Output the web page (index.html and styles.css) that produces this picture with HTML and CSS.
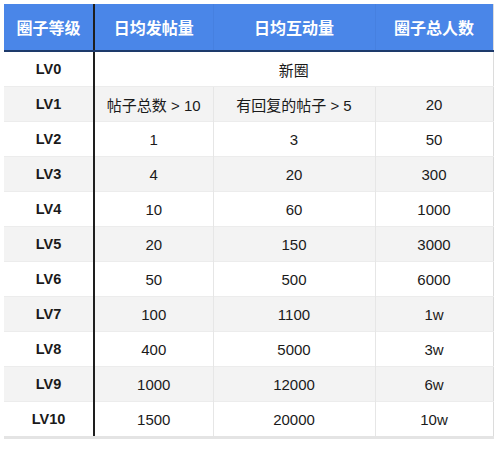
FILE: index.html
```html
<!DOCTYPE html>
<html>
<head>
<meta charset="utf-8">
<link rel="stylesheet" href="styles.css">
</head>
<body>
<div class="wrap">
<table class="grid">
  <colgroup>
    <col class="c1"><col class="c2"><col class="c3"><col class="c4">
  </colgroup>
  <thead>
    <tr><th class="lvl">圈子等级</th><th>日均发帖量</th><th>日均互动量</th><th>圈子总人数</th></tr>
  </thead>
  <tbody>
    <tr><td class="lvl">LV0</td><td colspan="3" class="span">新圈</td></tr>
    <tr class="alt"><td class="lvl">LV1</td><td>帖子总数 &gt; 10</td><td>有回复的帖子 &gt; 5</td><td>20</td></tr>
    <tr><td class="lvl">LV2</td><td>1</td><td>3</td><td>50</td></tr>
    <tr class="alt"><td class="lvl">LV3</td><td>4</td><td>20</td><td>300</td></tr>
    <tr><td class="lvl">LV4</td><td>10</td><td>60</td><td>1000</td></tr>
    <tr class="alt"><td class="lvl">LV5</td><td>20</td><td>150</td><td>3000</td></tr>
    <tr><td class="lvl">LV6</td><td>50</td><td>500</td><td>6000</td></tr>
    <tr class="alt"><td class="lvl">LV7</td><td>100</td><td>1100</td><td>1w</td></tr>
    <tr><td class="lvl">LV8</td><td>400</td><td>5000</td><td>3w</td></tr>
    <tr class="alt"><td class="lvl">LV9</td><td>1000</td><td>12000</td><td>6w</td></tr>
    <tr><td class="lvl">LV10</td><td>1500</td><td>20000</td><td>10w</td></tr>
  </tbody>
</table>
</div>
</body>
</html>
```
FILE: styles.css
```css
html, body {
  margin: 0;
  padding: 0;
  background: #ffffff;
}
.wrap {
  padding: 4px 0 0 4px;
}
.grid {
  border-collapse: collapse;
  table-layout: fixed;
  width: 489px;
  font-family: "Liberation Sans", "Noto Sans CJK SC", sans-serif;
  color: #1a1a1a;
  border-right: 1px solid #dcdcdc;
  border-bottom: 3px solid #e4e4e4;
}
.c1 { width: 90px; }
.c2 { width: 119px; }
.c3 { width: 162px; }
.c4 { width: 118px; }
thead th {
  background: #4a86e8;
  color: #ffffff;
  font-size: 16px;
  font-weight: bold;
  height: 46px;
  padding: 0;
  border-bottom: 2px solid #1d3a6b;
  border-left: 1px solid #4680e0;
  text-align: center;
  vertical-align: middle;
}
thead th.lvl {
  border-left: none;
  border-right: 2px solid #1e1e1e;
}
tbody td {
  height: 34px;
  padding: 0;
  font-size: 15px;
  text-align: center;
  vertical-align: middle;
  border-top: 1px solid #ececec;
  border-left: 1px solid #e6e6e6;
}
tbody tr:first-child td {
  border-top: none;
  height: 34px;
}
tbody td.lvl {
  font-size: 14.5px;
  font-weight: bold;
  border-left: none;
  border-right: 2px solid #1e1e1e;
}
tbody td.span {
  border-left: 2px solid #1e1e1e;
}
tr.alt td {
  background: #f3f3f3;
}
```
